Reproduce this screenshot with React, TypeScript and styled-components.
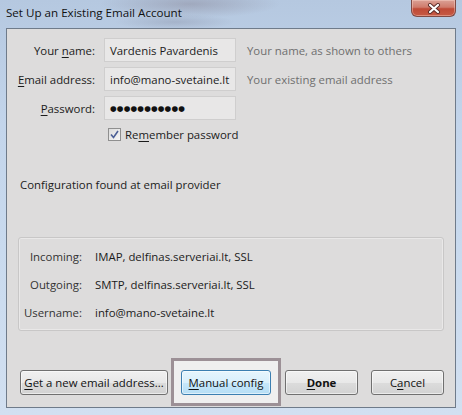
import React from 'react';
import styled, { createGlobalStyle } from 'styled-components';

const Global = createGlobalStyle`
  html, body { margin: 0; padding: 0; background: #c6d7ec; }
  body { font-family: "Segoe UI", "Open Sans", sans-serif; font-size: 11.4px; color: #1b1b1b; }
  * { box-sizing: border-box; }
`;

const Window = styled.div`
  width: 462px;
  height: 415px;
  display: flex;
  flex-direction: column;
  overflow: hidden;
  background:
    radial-gradient(ellipse 90px 14px at 190px 4px, rgba(120, 110, 125, 0.35), rgba(120, 110, 125, 0) 100%),
    radial-gradient(ellipse 60px 8px at 175px 22px, rgba(110, 110, 130, 0.25), rgba(110, 110, 130, 0) 100%),
    linear-gradient(180deg, #b5c8e0 0%, #c3d5eb 30%, #c9daee 60%, #d2e0f1 100%);
`;

const TitleBar = styled.div`
  height: 28px;
  display: flex;
  justify-content: space-between;
  align-items: flex-start;
  padding: 0 6px;
`;

const Title = styled.div`
  font-size: 11.6px;
  line-height: 16px;
  margin-top: 5px;
  color: #111;
`;

const CloseButton = styled.div`
  width: 45px;
  height: 17px;
  border: 1px solid #7f4a45;
  border-top: none;
  border-radius: 0 0 6px 6px;
  background: linear-gradient(180deg, #dba196 0%, #cf7b6c 45%, #bf4a37 55%, #c65a45 100%);
  box-shadow: inset 0 0 0 1px rgba(255, 220, 210, 0.4);
  display: flex;
  align-items: center;
  justify-content: center;
`;

const Client = styled.div`
  height: 380px;
  margin: 0 6px;
  border: 1px solid #6f7b8a;
  background: #dddcdc;
  display: flex;
  flex-direction: column;
`;

const FormGrid = styled.div`
  display: grid;
  grid-template-columns: 88px 132px auto;
  column-gap: 9px;
  row-gap: 5px;
  margin-top: 9px;
  grid-auto-rows: 24px;
  align-items: center;
`;

const Label = styled.label`
  text-align: right;
  color: #1b1b1b;
  white-space: nowrap;
`;

const Input = styled.div`
  height: 24px;
  border: 1px solid #cfcece;
  background: #e8e7e7;
  padding: 0 5px;
  display: flex;
  align-items: center;
  white-space: nowrap;
  overflow: hidden;
`;

const Dots = styled.span`
  font-family: "DejaVu Sans", sans-serif;
  font-size: 7.6px;
  letter-spacing: 0.2px;
  color: #111;
`;

const Hint = styled.span`
  color: #6f6f6f;
  white-space: nowrap;
  margin-left: 2px;
`;

const CheckRow = styled.div`
  display: flex;
  align-items: center;
  gap: 4px;
  margin-top: 6px;
  margin-left: 101px;
  height: 17px;
`;

const Box = styled.span`
  width: 13px;
  height: 13px;
  border: 1px solid #8f8f8f;
  background: linear-gradient(135deg, #dcdcdc, #f6f6f6);
  display: inline-flex;
  align-items: center;
  justify-content: center;
`;

const Status = styled.div`
  margin-top: 34px;
  margin-left: 13px;
  line-height: 16px;
`;

const Panel = styled.div`
  margin: 44px 11px 0 11px;
  height: 94px;
  border: 1px solid #c8c7c7;
  border-radius: 3px;
  box-shadow: inset 0 0 0 1px rgba(255, 255, 255, 0.35);
  padding: 4px 0 5px;
  display: grid;
  grid-template-columns: 63px auto;
  column-gap: 13px;
  grid-auto-rows: 28px;
  align-items: center;
`;

const PanelLabel = styled.span`
  text-align: right;
  color: #333;
`;

const PanelValue = styled.span`
  color: #1b1b1b;
`;

const ButtonRow = styled.div`
  display: flex;
  align-items: center;
  margin-top: 27px;
  margin-left: 13px;
`;

const Button = styled.button<{ $w: number; $primary?: boolean; $blue?: boolean }>`
  width: ${(p) => p.$w}px;
  height: 25px;
  font-family: inherit;
  font-size: 11.4px;
  font-weight: ${(p) => (p.$primary ? 700 : 400)};
  color: #111;
  padding: 0;
  white-space: nowrap;
  border-radius: 3px;
  border: 1px solid ${(p) => (p.$blue ? '#3c7fb1' : '#707070')};
  background: ${(p) =>
    p.$blue
      ? 'linear-gradient(180deg, #e6f5fd 0%, #d9f0fc 50%, #c6e7fa 51%, #b6def5 100%)'
      : 'linear-gradient(180deg, #f0f0f0 0%, #e8e8e8 50%, #dcdcdc 51%, #d2d2d2 100%)'};
  box-shadow: inset 0 0 0 1px rgba(255, 255, 255, 0.55);
`;

const Highlight = styled.div`
  margin: 0 4px 0 3px;
  border: 3px solid #9c9096;
  background: #efefef;
  padding: 9px 7px 8px 7px;
  display: flex;
`;

const Gap = styled.div<{ $w: number }>`
  width: ${(p) => p.$w}px;
`;

const U = styled.u`
  text-decoration: underline;
  text-underline-offset: 2px;
`;

export default function App() {
  return (
    <>
      <Global />
      <Window>
        <TitleBar>
          <Title>Set Up an Existing Email Account</Title>
          <CloseButton>
            <svg width="14" height="11" viewBox="0 0 14 11">
              <path d="M3 2 L11 9 M11 2 L3 9" stroke="#5a2b28" strokeWidth="4" strokeLinecap="round" />
              <path d="M3 2 L11 9 M11 2 L3 9" stroke="#ffffff" strokeWidth="2.2" strokeLinecap="round" />
            </svg>
          </CloseButton>
        </TitleBar>
        <Client>
          <FormGrid>
            <Label>
              Your <U>n</U>ame:
            </Label>
            <Input>Vardenis Pavardenis</Input>
            <Hint>Your name, as shown to others</Hint>
            <Label>
              <U>E</U>mail address:
            </Label>
            <Input>info@mano-svetaine.lt</Input>
            <Hint>Your existing email address</Hint>
            <Label>
              <U>P</U>assword:
            </Label>
            <Input>
              <Dots>●●●●●●●●●●●</Dots>
            </Input>
            <span />
          </FormGrid>
          <CheckRow>
            <Box>
              <svg width="9" height="9" viewBox="0 0 9 9">
                <path d="M1 4.5 L3.5 7.5 L8 1" stroke="#4c5f96" strokeWidth="1.6" fill="none" />
              </svg>
            </Box>
            <span>
              Re<U>m</U>ember password
            </span>
          </CheckRow>
          <Status>Configuration found at email provider</Status>
          <Panel>
            <PanelLabel>Incoming:</PanelLabel>
            <PanelValue>IMAP, delfinas.serveriai.lt, SSL</PanelValue>
            <PanelLabel>Outgoing:</PanelLabel>
            <PanelValue>SMTP, delfinas.serveriai.lt, SSL</PanelValue>
            <PanelLabel>Username:</PanelLabel>
            <PanelValue>info@mano-svetaine.lt</PanelValue>
          </Panel>
          <ButtonRow>
            <Button $w={148}>
              <U>G</U>et a new email address...
            </Button>
            <Highlight>
              <Button $w={90} $blue>
                <U>M</U>anual config
              </Button>
            </Highlight>
            <Button $w={73} $primary>
              <U>D</U>one
            </Button>
            <Gap $w={13} />
            <Button $w={73}>
              C<U>a</U>ncel
            </Button>
          </ButtonRow>
        </Client>
      </Window>
    </>
  );
}
